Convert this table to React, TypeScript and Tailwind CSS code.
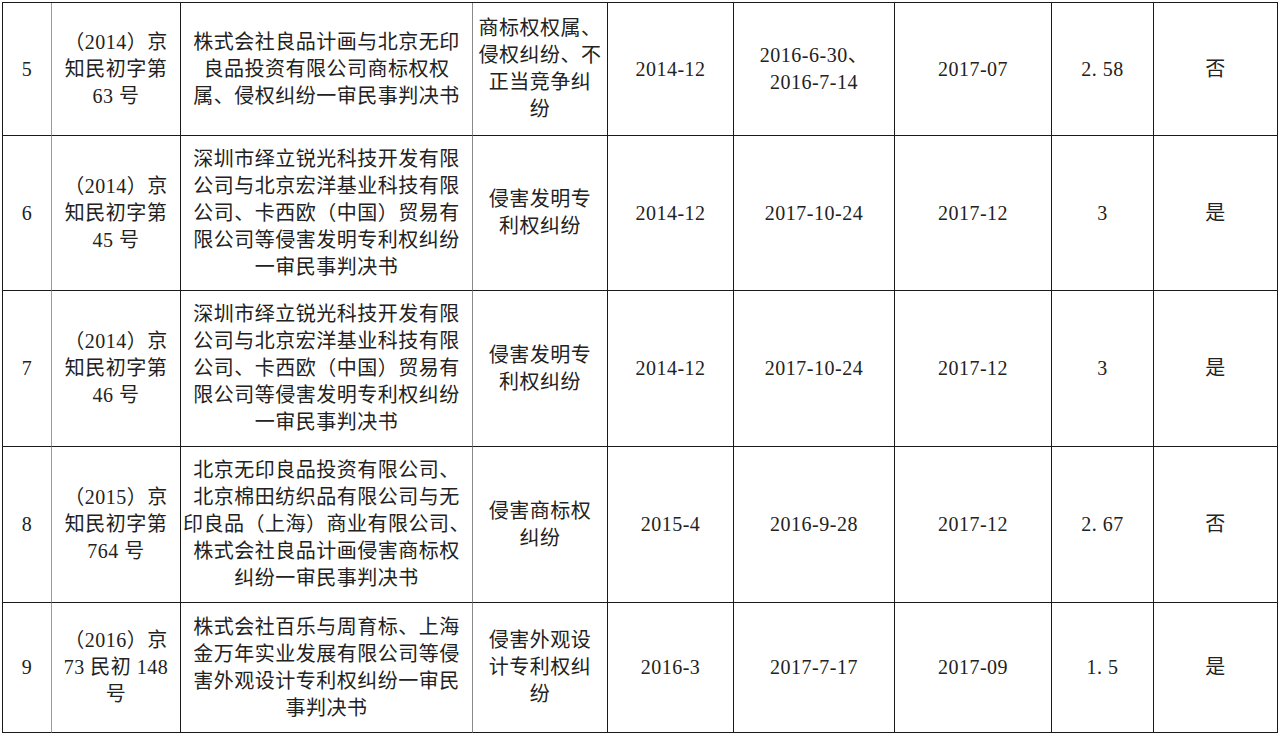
const rows = [
  {
    no: "5",
    h: "h-[133px]",
    caseNo: ["（2014）京", "知民初字第", "63 号"],
    title: ["株式会社良品计画与北京无印", "良品投资有限公司商标权权", "属、侵权纠纷一审民事判决书"],
    type: ["商标权权属、", "侵权纠纷、不", "正当竞争纠", "纷"],
    filed: ["2014-12"],
    heard: ["2016-6-30、", "2016-7-14"],
    decided: ["2017-07"],
    years: "2. 58",
    result: "否",
  },
  {
    no: "6",
    h: "h-[155px]",
    caseNo: ["（2014）京", "知民初字第", "45 号"],
    title: ["深圳市绎立锐光科技开发有限", "公司与北京宏洋基业科技有限", "公司、卡西欧（中国）贸易有", "限公司等侵害发明专利权纠纷", "一审民事判决书"],
    type: ["侵害发明专", "利权纠纷"],
    filed: ["2014-12"],
    heard: ["2017-10-24"],
    decided: ["2017-12"],
    years: "3",
    result: "是",
  },
  {
    no: "7",
    h: "h-[156px]",
    caseNo: ["（2014）京", "知民初字第", "46 号"],
    title: ["深圳市绎立锐光科技开发有限", "公司与北京宏洋基业科技有限", "公司、卡西欧（中国）贸易有", "限公司等侵害发明专利权纠纷", "一审民事判决书"],
    type: ["侵害发明专", "利权纠纷"],
    filed: ["2014-12"],
    heard: ["2017-10-24"],
    decided: ["2017-12"],
    years: "3",
    result: "是",
  },
  {
    no: "8",
    h: "h-[156px]",
    caseNo: ["（2015）京", "知民初字第", "764 号"],
    title: ["北京无印良品投资有限公司、", "北京棉田纺织品有限公司与无", "印良品（上海）商业有限公司、", "株式会社良品计画侵害商标权", "纠纷一审民事判决书"],
    type: ["侵害商标权", "纠纷"],
    filed: ["2015-4"],
    heard: ["2016-9-28"],
    decided: ["2017-12"],
    years: "2. 67",
    result: "否",
  },
  {
    no: "9",
    h: "h-[130px]",
    caseNo: ["（2016）京", "73 民初 148", "号"],
    title: ["株式会社百乐与周育标、上海", "金万年实业发展有限公司等侵", "害外观设计专利权纠纷一审民", "事判决书"],
    type: ["侵害外观设", "计专利权纠", "纷"],
    filed: ["2016-3"],
    heard: ["2017-7-17"],
    decided: ["2017-09"],
    years: "1. 5",
    result: "是",
  },
];

const Lines = ({ lines }: { lines: string[] }) => (
  <>
    {lines.map((l, i) => (
      <div key={i} className="whitespace-nowrap">
        {l}
      </div>
    ))}
  </>
);

const cell = "border-b border-r border-[#1a1a1a] text-center align-middle p-0";

export default function App() {
  return (
    <div
      className="w-[1280px] h-[735px] bg-white pt-[2px] pl-[2px] text-[#222] text-[20px] leading-[27px] tracking-[0.5px]"
      style={{ fontFamily: '"Liberation Serif", "Noto Sans CJK SC", serif' }}
    >
      <table className="table-fixed border-separate border-spacing-0 border-t border-l border-[#1a1a1a] w-[1275px]">
        <colgroup>
          <col className="w-[49px]" />
          <col className="w-[129px]" />
          <col className="w-[292px]" />
          <col className="w-[135px]" />
          <col className="w-[126px]" />
          <col className="w-[161px]" />
          <col className="w-[157px]" />
          <col className="w-[102px]" />
          <col className="w-[124px]" />
        </colgroup>
        <tbody>
          {rows.map((r) => (
            <tr key={r.no} className={r.h}>
              <td className={`${cell} border-r-[#9a9a9a]`}>{r.no}</td>
              <td className={cell}>
                <Lines lines={r.caseNo} />
              </td>
              <td className={`${cell} border-r-[#8a8a8a]`}>
                <Lines lines={r.title} />
              </td>
              <td className={cell}>
                <Lines lines={r.type} />
              </td>
              <td className={cell}>
                <Lines lines={r.filed} />
              </td>
              <td className={cell}>
                <Lines lines={r.heard} />
              </td>
              <td className={cell}>
                <Lines lines={r.decided} />
              </td>
              <td className={cell}>{r.years}</td>
              <td className={cell}>{r.result}</td>
            </tr>
          ))}
        </tbody>
      </table>
    </div>
  );
}
